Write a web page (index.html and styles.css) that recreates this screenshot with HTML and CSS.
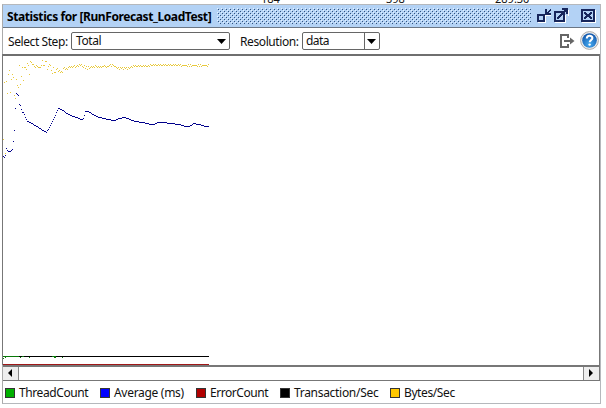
FILE: index.html
```html
<!DOCTYPE html>
<html lang="en">
<head>
<meta charset="utf-8">
<title>Statistics</title>
<link rel="stylesheet" href="styles.css">
</head>
<body>
<div class="backdrop"><span class="n1">184</span><span class="n2">398</span><span class="n3">289.30</span></div>
<main class="window">
  <header class="titlebar">
    <h1 class="title">Statistics for [RunForecast_LoadTest]</h1>
    <div class="grip"></div>
    <svg class="controls" width="62" height="20" viewBox="0 0 62 20" shape-rendering="crispEdges" fill="none">
      <g stroke="#fff"><path d="M2 16.500h7.500V9M10 9.500h5M19 16.500h10.500V9M32.500 4v6M46 16.500h13.500V4"/></g>
      <g stroke="#17265c" stroke-width="2"><path d="M2 9h6v6H2zM19 6h9v9h-9zM46 4h12v11H46z"/></g>
      <path fill="#17265c" d="M9 3h2v3h1v-1h1v-1h1v-1h1v2h-1v1h-1v1h2v2H9zM26 2h6v6h-2V6h-1v1h-1v1h-1v1h-1v1h-1v1h-1v1h-1v1h-2v-2h1v-1h1V9h1V8h1V7h1V6h1V5h1V4h-2zM48 6h2v1h1v1h2V7h1V6h2v2h-1v1h-1v1h1v1h1v2h-2v-1h-1v-1h-2v1h-1v1h-2v-2h1v-1h1V9h-1V8h-1z"/>
    </svg>
  </header>
  <section class="toolbar">
    <label class="lab1">Select Step:</label>
    <div class="combo step"><span>Total</span><svg width="9" height="5"><path d="M0 0h9L4.500 5z"/></svg></div>
    <label class="lab2">Resolution:</label>
    <div class="combo res"><span>data</span><i><svg width="9" height="5"><path d="M0 0h9L4.500 5z"/></svg></i></div>
    <svg class="export" width="15" height="14" viewBox="0 0 15 14" fill="none" stroke="#666" stroke-width="2"><path d="M8 4V1H1v12h7v-3M4 7h7"/><path d="M10 3.500L14.500 7 10 10.500z" fill="#666" stroke="none"/></svg>
    <svg class="help" width="19" height="19" viewBox="0 0 19 19"><defs><radialGradient id="g" cx=".5" cy=".75" r=".7"><stop offset="0" stop-color="#45aaf0"/><stop offset="1" stop-color="#1459ad"/></radialGradient></defs><circle cx="9.500" cy="9.500" r="8.900" fill="#eee" stroke="#aaa"/><circle cx="9.500" cy="9.500" r="7.300" fill="url(#g)"/><path d="M6.800 7.600c0-3.800 5.600-3.600 5.600-.5 0 2-2.700 2-2.700 4.100" fill="none" stroke="#fff" stroke-width="2"/><circle cx="9.600" cy="13.600" r="1.200" fill="#fff"/></svg>
  </section>
  <section class="chart">
    <svg width="595" height="309" viewBox="3 56 595 309" shape-rendering="crispEdges" fill="none">
      <path id="bytes" stroke="#e8c93c"/>
      <path id="average" stroke="#00008b"/>
      <path stroke="#000" d="M3 356.500h206"/>
      <path stroke="#087808" d="M3 356.500h16M22 356.500h2M52 356.500h4M3 358.500h1M5 357.500h1M20 357.500h1M29 357.500h1M54 357.500h2M62 357.500h1"/>
      <path stroke="#a01818" d="M3 364.500h206"/>
    </svg>
  </section>
  <div class="scroll"><b><svg width="4" height="8"><path d="M4 0v8L0 4z"/></svg></b><div class="track"></div><b class="right"><svg width="4" height="8"><path d="M0 0v8L4 4z"/></svg></b></div>
  <footer class="legend">
    <div class="item i1"><i></i><span>ThreadCount</span></div>
    <div class="item i2"><i></i><span>Average (ms)</span></div>
    <div class="item i3"><i></i><span>ErrorCount</span></div>
    <div class="item i4"><i></i><span>Transaction/Sec</span></div>
    <div class="item i5"><i></i><span>Bytes/Sec</span></div>
  </footer>
</main>
<script src="chart.js"></script>
</body>
</html>
```
FILE: styles.css
```css
* { box-sizing: border-box; }
body { margin: 0; width: 606px; height: 408px; overflow: hidden; background: #fff; font: 12px/16px "Noto Sans", sans-serif; color: #111; }
svg { display: block; flex: none; }
.backdrop { height: 4px; overflow: hidden; display: flex; font-size: 11px; line-height: 4px; padding-left: 261px; }
.backdrop span { margin-top: -3px; }
.n1 { width: 125px; }
.n2 { width: 109px; }
.window { margin-left: 2px; width: 599px; height: 400px; border: 1px solid #b5b8bc; border-left-color: #aaa; display: flex; flex-direction: column; }
.titlebar { height: 23px; background: #b3d2f5; border-bottom: 1px solid #6b7684; display: flex; padding-left: 4px; flex: none; }
.title { margin: 0; width: 210px; font-size: 12px; line-height: 23px; white-space: nowrap; font-weight: 700; color: #000; letter-spacing: -0.41px; }
.grip { margin-top: 3px; width: 314px; height: 16px; background-color: #b3d2f5; background-image: conic-gradient(from 270deg at 1px 1px, #31527f 90deg, transparent 0), conic-gradient(from 270deg at 1px 1px, #31527f 90deg, transparent 0), conic-gradient(from 270deg at 1px 1px, #e2f0ff 90deg, transparent 0), conic-gradient(from 270deg at 1px 1px, #e2f0ff 90deg, transparent 0); background-size: 4px 4px; background-position: 1px 1px, 3px 3px, 0 0, 2px 2px; }
.controls { margin: 1px 0 0 5px; }
.toolbar { height: 26px; display: flex; flex: none; padding-left: 5px; line-height: 28px; white-space: nowrap; }
.lab1 { width: 63px; letter-spacing: -.42px; }
.lab2 { width: 62px; margin-left: 10px; letter-spacing: -.4px; }
.combo { height: 18px; margin-top: 4px; border: 1px solid #666; border-radius: 2px; display: flex; align-items: center; line-height: 16px; padding-left: 4px; letter-spacing: -.4px; }
.combo span { flex: 1; }
.step { width: 159px; padding-right: 3px; }
.res { width: 78px; padding-left: 3px; letter-spacing: -.6px; }
.res i { width: 15px; height: 16px; border-left: 1px solid #666; padding: 6px 2px; }
.export { margin: 6px 0 0 180px; }
.help { margin: 3px 0 0 5px; }
.chart { height: 311px; border-top: 2px solid #777; border-top-color: #6f6f6f; border-right: 1px solid #777; flex: none; box-shadow: -1px 0 #777; }
.chart svg { width: 595px; }
.scroll { height: 16px; flex: none; display: flex; border: 1px solid #777; border-width: 2px 1px 1px 0; }
.scroll b { width: 16px; background: #eee; border-right: 1px solid #888; padding: 2px 0 0 5px; }
.track { flex: 1; }
.scroll .right { border-right: 0; border-left: 1px solid #888; }
.legend { flex: 1; display: flex; padding-left: 2px; white-space: nowrap; line-height: 24px; }
.item { display: flex; align-items: center; }
.item i { width: 10px; height: 10px; border: 1px solid #333; margin-right: 4px; flex: none; }
.i1 { width: 95px; letter-spacing: -.4px; } .i1 i { background: #00b000; }
.i2 { width: 96px; letter-spacing: -.3px; } .i2 i { background: #00f; }
.i3 { width: 84px; letter-spacing: -.45px; } .i3 i { background: #b00000; }
.i4 { width: 110px; letter-spacing: -.3px; } .i4 i { background: #000; }
.i5 { letter-spacing: -.4px; } .i5 i { background: #ffc800; }
```
FILE: chart.js
```js
// Average response time: [x, y] knots, one sample per column between them.
const average = [[3,156],[4,157],[5,155],[6,148],[8,151],[10,151],[12,149],[13,141],[14,130],[15,108],[16,93],[18,95],[19,104],[20,105],[22,112],[23,112],[27,121],[30,122],[46,132],[49,127],[53,119],[58,108],[61,109],[68,114],[81,119],[83,118],[85,111],[88,111],[96,116],[107,119],[114,120],[118,118],[124,117],[135,121],[142,122],[151,124],[154,124],[157,122],[164,122],[170,123],[179,124],[185,126],[189,126],[193,123],[199,124],[205,126],[209,126]];
const bytes = [139,82,153,81,93,74,70,92,79,74,77,95,98,79,85,87,65,84,76,67,80,67,67,69,63,65,74,61,62,64,64,66,67,65,66,67,67,67,65,60,65,65,61,61,69,66,64,65,70,73,67,72,72,69,68,71,70,72,71,72,68,67,69,68,69,67,66,67,66,67,66,65,67,66,65,66,64,65,64,66,67,65,68,66,69,66,68,67,66,67,66,67,65,66,67,66,67,66,67,66,66,65,66,67,66,66,65,64,66,64,65,66,66,67,68,67,69,67,68,67,69,67,68,67,69,67,68,67,66,67];
let d = "";
for (let i = 1; i < average.length; i++) {
  const [x0, y0] = average[i - 1], [x1, y1] = average[i];
  for (let x = x0; x < x1; x++) d += `M${x} ${Math.round(y0 + (y1 - y0) * (x - x0) / (x1 - x0)) + .5}h1`;
}
document.getElementById("average").setAttribute("d", d);
d = "";
for (let x = 3; x < 209; x++) {
  const i = x - 3;
  const y = i < bytes.length ? bytes[i] : (x < 150 ? 66 : 65) + (x * 7 % 5 < 2 ? -1 : 0) + (x > 180 ? x % 2 : 0);
  d += `M${x} ${y + .5}h1`;
}
document.getElementById("bytes").setAttribute("d", d);
```
